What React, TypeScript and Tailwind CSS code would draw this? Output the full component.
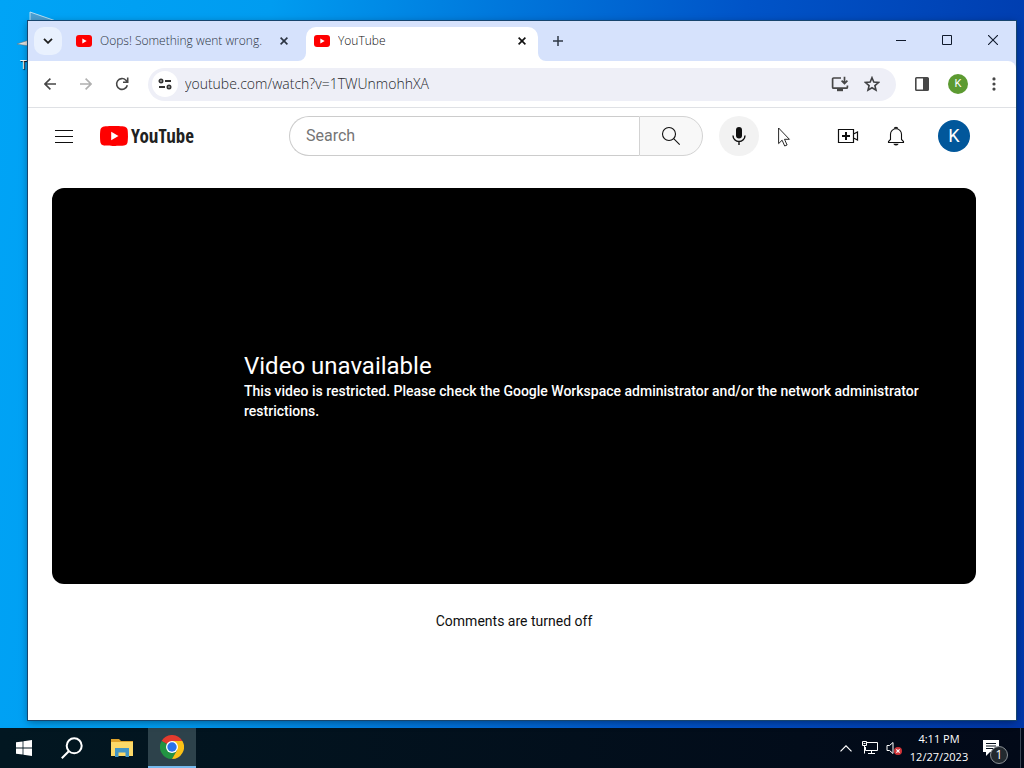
import React from "react";

const ui = "font-['Open_Sans','Noto_Sans',sans-serif]";
const roboto = "font-[Roboto,'Liberation_Sans',sans-serif]";

function PlayLogo({ className }: { className: string }) {
  return (
    <svg viewBox="0 0 28 20" className={className} aria-hidden="true">
      <path
        d="M27.4 3.1A3.5 3.5 0 0 0 25 .65C22.8 0 14 0 14 0S5.200 0 3 .65A3.500 3.500 0 0 0 .6 3.100C0 5.300 0 10 0 10s0 4.700.6 6.900A3.500 3.500 0 0 0 3 19.350C5.200 20 14 20 14 20s8.800 0 11-.65a3.500 3.500 0 0 0 2.400-2.450C28 14.700 28 10 28 10s0-4.700-.6-6.900Z"
        fill="#f00"
      />
      <path d="M11.200 14.300 18.500 10l-7.300-4.300Z" fill="#fff" />
    </svg>
  );
}

function Favicon() {
  return (
    <svg viewBox="0 0 16 12" className="h-3 w-4 shrink-0" aria-hidden="true">
      <rect width="16" height="12" rx="3" fill="#f00" />
      <path d="M6.300 3.600 10.700 6 6.300 8.400Z" fill="#fff" />
    </svg>
  );
}

function CloseIcon() {
  return (
    <svg viewBox="0 0 8 8" className="size-2" fill="none" stroke="currentColor" strokeWidth="1.6" aria-hidden="true">
      <path d="m.6.6 6.800 6.800M7.400.6.6 7.400" />
    </svg>
  );
}

function TabStrip() {
  return (
    <div className={`flex h-10 items-end bg-[#d6e2fc] ${ui}`}>
      <button aria-label="Search tabs" className="mb-[6px] ml-[6px] flex size-7 shrink-0 items-center justify-center rounded-[10px] bg-[#e9f1fe]">
        <svg viewBox="0 0 10 6" className="h-[6px] w-[10px]" fill="none" stroke="#1f1f1f" strokeWidth="1.800" aria-hidden="true">
          <path d="m1 .8 4 4 4-4" />
        </svg>
      </button>
      <div role="tablist" className="flex min-w-0 items-end">
        <div className="flex h-[34px] w-[236px] items-center pl-[14px] text-[#2c3442]">
          <button role="tab" aria-selected="false" className="mb-[6px] flex min-w-0 flex-1 items-center gap-2 text-left">
            <Favicon />
            <span className="truncate text-xs font-light">Oops! Something went wrong.</span>
          </button>
          <button aria-label="Close tab" className="mr-1 mb-[6px] flex size-5 shrink-0 items-center justify-center">
            <CloseIcon />
          </button>
        </div>
        <svg viewBox="0 0 8 8" className="size-2 shrink-0" aria-hidden="true">
          <path d="M8 0v8H0a8 8 0 0 0 8-8Z" fill="#fff" />
        </svg>
        <div className="flex h-[34px] w-[232px] items-center rounded-t-[10px] bg-white pl-2 text-[#101010]">
          <button role="tab" aria-selected="true" className="mb-[6px] flex min-w-0 flex-1 items-center gap-2 text-left">
            <Favicon />
            <span className="truncate text-xs font-light">YouTube</span>
          </button>
          <button aria-label="Close tab" className="mr-[6px] mb-[6px] flex size-5 shrink-0 items-center justify-center">
            <CloseIcon />
          </button>
        </div>
        <svg viewBox="0 0 8 8" className="size-2 shrink-0" aria-hidden="true">
          <path d="M0 0v8h8A8 8 0 0 1 0 0Z" fill="#fff" />
        </svg>
      </div>
      <button aria-label="New tab" className="mb-[6px] flex h-7 w-6 items-center justify-center">
        <svg viewBox="0 0 10 10" className="size-[10px]" stroke="#2f3845" strokeWidth="1.500" aria-hidden="true">
          <path d="M5 0v10M0 5h10" />
        </svg>
      </button>
      <div className="ml-auto flex h-full pb-[2px] text-[#101a2c]">
        <button aria-label="Minimize" className="flex w-[46px] items-center justify-center">
          <svg viewBox="0 0 10 10" className="size-[10px]" fill="none" stroke="currentColor" aria-hidden="true"><path d="M0 5.500h10" /></svg>
        </button>
        <button aria-label="Maximize" className="flex w-[46px] items-center justify-center">
          <svg viewBox="0 0 10 10" className="size-[10px]" fill="none" stroke="currentColor" aria-hidden="true"><path d="M.5.5h9v9h-9z" /></svg>
        </button>
        <button aria-label="Close window" className="flex w-[46px] items-center justify-center">
          <svg viewBox="0 0 10 10" className="size-[10px]" fill="none" stroke="currentColor" strokeWidth="1.100" aria-hidden="true"><path d="m0 0 10 10M10 0 0 10" /></svg>
        </button>
      </div>
    </div>
  );
}

function Toolbar() {
  return (
    <div className="bg-[#d6e2fc]">
      <div className={`flex h-[47px] items-center rounded-tr-lg border-b border-[#dfe1e5] bg-white px-1 ${ui}`}>
        <button aria-label="Back" className="flex size-9 items-center justify-center text-[#474747]">
          <svg viewBox="0 0 12 12" className="size-3" fill="none" stroke="currentColor" strokeWidth="1.600" aria-hidden="true"><path d="M12 6H1.200M6.400.6 1 6l5.400 5.400" /></svg>
        </button>
        <button aria-label="Forward" disabled className="flex size-9 items-center justify-center text-[#b0b0b0]">
          <svg viewBox="0 0 12 12" className="size-3" fill="none" stroke="currentColor" strokeWidth="1.600" aria-hidden="true"><path d="M0 6h10.800M5.600.6 11 6l-5.400 5.400" /></svg>
        </button>
        <button aria-label="Reload" className="flex size-9 items-center justify-center text-[#474747]">
          <svg viewBox="0 0 16 16" className="size-4" fill="none" stroke="currentColor" strokeWidth="1.600" aria-hidden="true"><path d="M13.300 9.200A5.400 5.400 0 1 1 11.900 4.200L13.500 6M13.700 1.600v4.700H9" /></svg>
        </button>
        <div className="ml-2 flex h-[33px] min-w-0 flex-1 items-center rounded-full bg-[#eeeff7] px-1">
          <button aria-label="View site information" className="flex size-[26px] shrink-0 items-center justify-center rounded-full bg-white">
            <svg viewBox="0 0 14 12" className="h-3 w-[14px]" fill="none" stroke="#333" strokeWidth="1.800" aria-hidden="true">
              <circle cx="3" cy="3" r="1.600" /><path d="M7 3h6M1 9h6" /><circle cx="11" cy="9" r="1.600" />
            </svg>
          </button>
          <input aria-label="Address" defaultValue="youtube.com/watch?v=1TWUnmohhXA" className="ml-[7px] min-w-0 flex-1 bg-transparent text-sm font-light text-[#26282c] outline-none" />
          <button aria-label="Install app" className="flex size-8 items-center justify-center">
            <svg viewBox="0 0 18 16" className="h-4 w-[18px]" fill="none" stroke="#474747" strokeWidth="1.700" aria-hidden="true">
              <path d="M10 2H2.600a1 1 0 0 0-1 1v8.200a1 1 0 0 0 1 1h12.800a1 1 0 0 0 1-1V9.500M13.500.8v6.400M10.600 4.600l2.900 2.900 2.900-2.900" />
              <path d="M6 14h6" strokeWidth="2.400" />
            </svg>
          </button>
          <button aria-label="Bookmark this tab" className="mr-1 flex size-8 items-center justify-center">
            <svg viewBox="0 0 16 16" className="size-4" fill="none" stroke="#3f4043" strokeWidth="1.600" aria-hidden="true">
              <path d="m8 1.700 1.800 4.400 4.700.4-3.600 3.100 1.100 4.600L8 11.800l-4 2.400 1.100-4.600-3.600-3.100 4.700-.4Z" />
            </svg>
          </button>
        </div>
        <button aria-label="Side panel" className="ml-2 flex size-9 items-center justify-center">
          <svg viewBox="0 0 14 14" className="size-[14px]" aria-hidden="true">
            <rect x=".8" y=".8" width="12.400" height="12.400" rx=".8" fill="none" stroke="#474747" strokeWidth="1.600" /><path d="M8 1h5.500v12H8z" fill="#474747" />
          </svg>
        </button>
        <button aria-label="Profile" className="flex size-9 items-center justify-center">
          <span className={`flex size-5 items-center justify-center rounded-full bg-[#5c9a31] text-[11px] text-white ${roboto}`}>K</span>
        </button>
        <button aria-label="Chrome menu" className="flex size-9 items-center justify-center">
          <svg viewBox="0 0 4 14" className="h-[14px] w-1" fill="#474747" aria-hidden="true"><circle cx="2" cy="1.900" r="1.600" /><circle cx="2" cy="7" r="1.600" /><circle cx="2" cy="12.100" r="1.600" /></svg>
        </button>
      </div>
    </div>
  );
}

function Masthead() {
  return (
    <header className="flex h-14 shrink-0 items-center pr-[46px] pl-4">
      <button aria-label="Guide" className="flex size-10 items-center justify-center">
        <svg viewBox="0 0 18 13" className="h-[13px] w-[18px]" stroke="#0f0f0f" aria-hidden="true"><path d="M0 .5h18M0 6.500h18M0 12.500h18" /></svg>
      </button>
      <a href="#" aria-label="YouTube home" className="ml-4 flex items-center gap-[3px]">
        <PlayLogo className="h-5 w-7 shrink-0" />
        <span className="font-['Open_Sans_Condensed','Roboto_Condensed',Roboto,sans-serif] text-[19px] leading-6 font-bold text-[#212121]">YouTube</span>
      </a>
      <form role="search" className="ml-auto flex h-10 w-[414px]" onSubmit={(e) => e.preventDefault()}>
        <input aria-label="Search" placeholder="Search" className="min-w-0 flex-1 rounded-l-full border border-r-0 border-[#ccc] px-4 text-base text-[#0f0f0f] outline-none placeholder:text-[#757575]" />
        <button aria-label="Submit search" className="flex w-16 items-center justify-center rounded-r-full border border-[#d3d3d3] bg-[#f8f8f8]">
          <svg viewBox="0 0 20 20" className="size-5" fill="none" stroke="#0f0f0f" strokeWidth="1.100" aria-hidden="true"><circle cx="8" cy="8" r="6.500" /><path d="m12.700 12.700 6 6" /></svg>
        </button>
      </form>
      <button aria-label="Search with your voice" className="ml-4 flex size-10 items-center justify-center rounded-full bg-[#f2f2f2]">
        <svg viewBox="0 0 14 20" className="h-5 w-[14px]" aria-hidden="true"><rect x="4" y="1" width="6" height="11.500" rx="3" fill="#0f0f0f" /><path d="M1 9.500a6 6 0 0 0 12 0M7 15.500V19" fill="none" stroke="#0f0f0f" strokeWidth="1.400" /></svg>
      </button>
      <div className="ml-[69px] flex items-center gap-2">
        <button aria-label="Create" className="flex size-10 items-center justify-center">
          <svg viewBox="0 0 22 16" className="h-4 w-[22px]" fill="none" stroke="#0f0f0f" strokeWidth="1.200" aria-hidden="true"><path d="M1.500 1.500h15v13h-15zM16.500 6l4-2v8l-4-2" /><path d="M9 4v8M5 8h8" strokeWidth="2" /></svg>
        </button>
        <button aria-label="Notifications" className="flex size-10 items-center justify-center">
          <svg viewBox="0 0 18 20" className="h-5 w-[18px]" fill="none" stroke="#0f0f0f" strokeWidth="1.100" aria-hidden="true"><path d="M1.500 16.500v-1l2-2V8.300a5.500 5.500 0 0 1 11 0v5.200l2 2v1Z" /><path d="M7.200 2.500a1.900 1.900 0 0 1 3.600 0M7.300 18.300a1.800 1 0 0 0 3.400 0Z" fill="#0f0f0f" /></svg>
        </button>
      </div>
      <button aria-label="Account" className="ml-[22px] flex size-8 items-center justify-center rounded-full bg-[#01579b] text-lg text-white">K</button>
    </header>
  );
}

function BrowserWindow() {
  return (
    <div className="flex flex-1 flex-col bg-white shadow-[0_0_0_1px_#17456e,0_2px_8px_rgba(0,0,0,0.4)]">
      <TabStrip />
      <Toolbar />
      <div className={`flex flex-1 flex-col ${roboto}`}>
        <Masthead />
        <main className="px-6 pt-6 pr-10">
          <section className="flex h-[396px] flex-col justify-center rounded-xl bg-black pr-10 pb-[1px] pl-48 text-white">
            <h1 className="text-2xl leading-[30px]">Video unavailable</h1>
            <p className="text-sm leading-5 font-medium">This video is restricted. Please check the Google Workspace administrator and/or the network administrator restrictions.</p>
          </section>
          <p className="mt-[27px] text-center text-sm leading-5 text-[#0f0f0f]">Comments are turned off</p>
        </main>
      </div>
    </div>
  );
}

function Taskbar() {
  return (
    <footer className={`flex h-10 shrink-0 items-stretch bg-linear-to-r from-[#021721] to-[#020918] text-white ${ui}`}>
      <button aria-label="Start" className="flex w-12 items-center justify-center">
        <svg viewBox="0 0 16 16" className="size-4" fill="#fff" aria-hidden="true"><path d="M0 2.300 6.600 1.400v6.200H0zM7.400 1.300 16 0v7.600H7.400zM0 8.400h6.600v6.200L0 13.700zM7.400 8.400H16V16l-8.600-1.300z" /></svg>
      </button>
      <button aria-label="Search Windows" className="flex w-12 items-center justify-center">
        <svg viewBox="0 0 22 22" className="size-[22px]" fill="none" stroke="#fff" strokeWidth="2" aria-hidden="true"><circle cx="13.200" cy="8.800" r="7.500" /><path d="m7.800 14.200-7 7" /></svg>
      </button>
      <button aria-label="File Explorer" className="flex w-[52px] items-center justify-center">
        <svg viewBox="0 0 22 18" className="h-[18px] w-[22px]" aria-hidden="true">
          <path d="M0 0h8l2 2h12v5H0z" fill="#dfa32b" /><path d="M0 3h22v14H0z" fill="#fcd968" /><path d="M4 9h14v9h-3.500v-4.500h-7V18H4z" fill="#4295c5" />
        </svg>
      </button>
      <button aria-label="Google Chrome" className="flex w-12 items-center justify-center border-b-2 border-[#76b9ed] bg-[#2d424b]">
        <svg viewBox="0 0 24 24" className="size-6" aria-hidden="true">
          <path d="M12 12 1.600 6A12 12 0 0 1 22.400 6Z" fill="#e33b2e" />
          <path d="M12 12 1.600 6A12 12 0 0 0 12 24l5.200-9Z" fill="#229342" />
          <path d="M12 6h10.400A12 12 0 0 1 12 24l5.200-9Z" fill="#fbc116" />
          <circle cx="12" cy="12" r="6" fill="#fff" /><circle cx="12" cy="12" r="4.700" fill="#2a72e8" />
        </svg>
      </button>
      <div className="ml-auto flex items-center">
        <button aria-label="Show hidden icons" className="flex w-6 items-center justify-center">
          <svg viewBox="0 0 12 7" className="h-[7px] w-3" fill="none" stroke="#fff" strokeWidth="1.200" aria-hidden="true"><path d="m.5 6.300 5.500-5.500 5.500 5.500" /></svg>
        </button>
        <button aria-label="Network" className="flex w-6 items-center justify-center">
          <svg viewBox="0 0 16 14" className="h-[14px] w-4" fill="none" stroke="#fff" aria-hidden="true"><path d="M5 1.500h10.500v8H3.500V6M.5.500h4v4h-4zM2.500 4.500v8M9.500 9.500v3M6 12.500h7M1.500 2.500h2" /></svg>
        </button>
        <button aria-label="Volume" className="flex w-6 items-center justify-center">
          <svg viewBox="0 0 16 16" className="size-4" fill="none" aria-hidden="true"><path d="M1 5.500h2.500l3.500-3v11l-3.500-3H1z" stroke="#fff" /><circle cx="12" cy="11" r="4" fill="#d13438" /><path d="m10.400 9.400 3.200 3.200m0-3.200-3.200 3.200" stroke="#fff" strokeWidth="1.200" /></svg>
        </button>
        <button className="flex w-[66px] flex-col items-center text-[11px] leading-[18px]">
          <span>4:11 PM</span>
          <span>12/27/2023</span>
        </button>
        <button aria-label="Notifications, 1 new" className="relative flex h-full w-[48px] items-center justify-center pr-[10px]">
          <svg viewBox="0 0 16 16" className="size-4" aria-hidden="true"><path d="M0 0h16v12H7l-4 4v-4H0z" fill="#fff" /><path d="M3 3.500h10M3 6h10M3 8.500h7" stroke="#06111d" /></svg>
          <span className="absolute top-[18px] left-[18px] flex size-[18px] items-center justify-center rounded-full border border-[#8a9095] bg-[#22292f] text-xs leading-none">1</span>
        </button>
        <div className="h-full w-1 border-l border-[#3b4553]" />
      </div>
    </footer>
  );
}

export default function App() {
  return (
    <div className="relative flex min-h-screen flex-col overflow-hidden bg-[linear-gradient(98deg,#00a4f6_0%,#009cf0_24%,#0078dc_44%,#0054c8_66%,#0036a8_100%)]">
      <svg viewBox="0 0 40 60" className="absolute top-[10px] left-[16px] h-[60px] w-10" aria-hidden="true">
        <path d="M14 2v18h26v-9Z" fill="#4b9fd2" stroke="#d8edf7" strokeWidth=".8" /><path d="m1 34 12-4v6Z" fill="#e5e5e2" stroke="#63727d" strokeWidth=".5" />
      </svg>
      <span className={`absolute top-[57px] left-[20px] text-xs text-white [text-shadow:1px_1px_1px_#000] ${ui}`}>Th</span>
      <div className="relative flex flex-1 flex-col pt-[21px] pr-2 pb-2 pl-7">
        <BrowserWindow />
      </div>
      <Taskbar />
      <svg viewBox="0 0 13 20" className="pointer-events-none absolute top-[127px] left-[778px] h-5 w-[13px]" aria-hidden="true">
        <path d="M.6 1v15.600l3.500-3.400 2.600 5.800 2.400-1-2.600-5.700h4.900Z" fill="#fff" stroke="#111" strokeWidth=".9" />
      </svg>
    </div>
  );
}
